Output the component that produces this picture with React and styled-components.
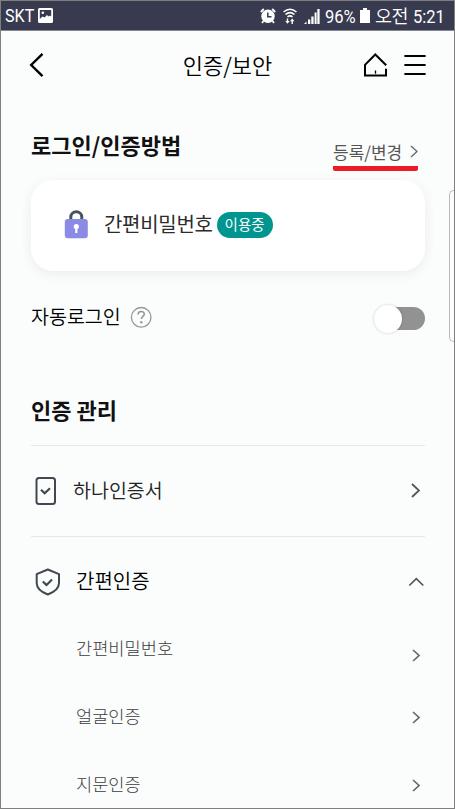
import React from "react";
import styled, { createGlobalStyle } from "styled-components";

const GlobalStyle = createGlobalStyle`
  * { box-sizing: border-box; }
  body { margin: 0; font-family: "Noto Sans CJK KR", "Noto Sans", sans-serif; }
  svg { display: block; flex: none; }
`;

const Screen = styled.div`
  position: relative;
  width: 455px;
  height: 809px;
  overflow: hidden;
  border: 1px solid #7f7f7f;
  background: #fbfdfc;
  display: flex;
  flex-direction: column;
`;

const StatusBar = styled.header`
  flex: none;
  display: flex;
  justify-content: space-between;
  height: 30px;
  padding: 0 10px 0 4px;
  background: #383a4f;
  border-bottom: 1px solid #85868e;
`;

const StatusGroup = styled.div`
  display: flex;
  align-items: center;
`;

const StatusIcons = styled.div`
  display: flex;
  align-items: center;
  gap: 7px;
  margin-right: 5px;
`;

const Text = styled.span`
  display: block;
  white-space: nowrap;
  line-height: 1;
  font-size: ${(p) => p.$size}px;
  font-weight: ${(p) => p.$weight || 400};
  color: ${(p) => p.$color || "#111"};
  letter-spacing: ${(p) => p.$spacing || 0}px;
  margin: ${(p) => p.$margin || 0};
`;

const StatusText = styled(Text)`
  width: ${(p) => p.$width}px;
  font-family: Roboto, sans-serif;
  transform: scaleX(0.88);
  transform-origin: 0 50%;
`;

const TitleBar = styled.nav`
  flex: none;
  display: grid;
  grid-template-columns: 1fr auto 1fr;
  align-items: center;
  height: 68px;
  margin-bottom: 2px;
  padding: 0 28px 0 27px;
`;

const Actions = styled.div`
  display: flex;
  justify-content: flex-end;
  gap: 16px;
`;

const Content = styled.main`
  display: flex;
  flex-direction: column;
  padding: 0 29px 0 30px;
`;

const SectionHead = styled.div`
  flex: none;
  display: flex;
  justify-content: space-between;
  height: ${(p) => p.$height}px;
  padding-top: ${(p) => p.$top}px;
`;

const ChangeLink = styled.div`
  display: flex;
  align-items: center;
  justify-content: space-between;
  width: 85px;
  height: 38px;
  margin: 0 7px 0 0;
  padding-top: 3px;
  border-bottom: 5px solid #ed1c24;
  border-radius: 2px;
`;

const Card = styled.section`
  flex: none;
  display: flex;
  align-items: center;
  height: 91px;
  padding: 0 33px;
  border-radius: 22px;
  background: #fff;
  box-shadow: 0 3px 12px rgba(60, 75, 75, 0.09);
`;

const Badge = styled.span`
  display: flex;
  align-items: center;
  justify-content: center;
  width: 56px;
  height: 26px;
  margin: -1px 0 0 4px;
  padding-bottom: 2px;
  border-radius: 13px;
  background: #00968f;
`;

const SettingRow = styled.div`
  flex: none;
  display: flex;
  align-items: center;
  height: 92px;
`;

const Toggle = styled.div`
  display: flex;
  align-items: center;
  width: 44px;
  height: 23px;
  margin: 3px 0 0 auto;
  border-radius: 12px;
  background: #929292;
`;

const Knob = styled.div`
  flex: none;
  width: 28px;
  height: 28px;
  margin-left: -7px;
  border-radius: 50%;
  background: #fff;
  box-shadow: 0 0 3px rgba(0, 0, 0, 0.2);
`;

const MenuRow = styled.div`
  flex: none;
  display: flex;
  align-items: center;
  height: ${(p) => p.$height}px;
  padding: ${(p) => p.$padding};
  border-top: 1px solid #e4e7ec;
`;

const SubRow = styled.div`
  flex: none;
  display: flex;
  align-items: center;
  justify-content: space-between;
  height: 68px;
  padding: 0 5px 0 45px;
`;

const EdgeHandle = styled.div`
  position: absolute;
  top: 189px;
  right: 0;
  width: 5px;
  height: 152px;
  border: 1px solid #b9bbbb;
  border-right: 0;
  border-radius: 5px 0 0 5px;
`;

const ChevronSvg = styled.svg`
  margin: ${(p) => p.$margin || 0};
`;

function Chevron({ width = 9, height = 14, color = "#555", stroke = 1.6, margin }) {
  return (
    <ChevronSvg $margin={margin} width={width} height={height} viewBox={`0 0 ${width} ${height}`} fill="none" stroke={color} strokeWidth={stroke}>
      <path d={`M1 1L${width - 1} ${height / 2}L1 ${height - 1}`} />
    </ChevronSvg>
  );
}

const PictureIcon = () => (
  <svg width="15" height="15" viewBox="0 0 15 15">
    <rect width="15" height="15" rx="1.5" fill="#fff" />
    <path d="M1.800 2h11.400v6.500L12 7.500 10.500 8.500 9 7 6.500 9.500 4.500 8.500 1.800 11z" fill="#383a4f" />
    <circle cx="4.800" cy="4.800" r="1.300" fill="#fff" />
  </svg>
);

const AlarmIcon = () => (
  <svg width="16" height="16" viewBox="0 0 16 16">
    <circle cx="8" cy="8.300" r="6.700" fill="#fff" />
    <path d="M.8 4l3-3M15.200 4l-3-3M3.500 13L2 15M12.500 13l1.500 2" stroke="#fff" strokeWidth="1.800" />
    <path d="M7.800 4.500v4.200h3.700" fill="none" stroke="#383a4f" strokeWidth="1.500" />
  </svg>
);

const WifiIcon = () => (
  <svg width="14" height="16" viewBox="0 0 14 16" fill="none" stroke="#fff" strokeWidth="1.600">
    <path d="M.5 4Q7-1.500 13.500 4M2.500 6.500Q7 2.700 11.500 6.500M4.500 8.800Q7 6.900 9.500 8.800" />
    <path d="M4.500 10.500v3.500M9.200 16v-3.500" strokeWidth="1.400" />
    <path d="M2.300 13h4.400l-2.200 2.800zM7 13.300l2.200-2.800 2.200 2.800z" fill="#fff" stroke="none" />
  </svg>
);

const SignalIcon = () => (
  <svg width="16" height="16" viewBox="0 0 16 16" fill="#fff">
    <path d="M0 16l2.500-2.500V16zM4 11.500h2.300V16H4zM7.300 8.500h2.300V16H7.300zM10.600 4.500h2V16h-2zM13.300 1h2.300v15h-2.300z" />
  </svg>
);

const BatteryIcon = () => (
  <svg width="10" height="15" viewBox="0 0 10 15" fill="#fff">
    <path d="M3 0h4v2h3v13H0V2h3z" />
  </svg>
);

const BackIcon = () => (
  <svg width="16" height="26" viewBox="0 0 16 26" fill="none" stroke="#000" strokeWidth="2.4">
    <path d="M14.500 1.800L3.200 13l11.300 11.200" />
  </svg>
);

const HomeIcon = () => (
  <svg width="25" height="26" viewBox="0 0 25 26" fill="none" stroke="#000" strokeWidth="2">
    <path d="M23.200 13.200L12.300 2.500 2 12.800v10.700h21V16.800" />
    <path d="M12.500 18.500v3.200" strokeWidth="1.300" />
  </svg>
);

const MenuIcon = () => (
  <svg width="22" height="26" viewBox="0 0 22 26" stroke="#000" strokeWidth="2.200" strokeLinecap="round">
    <path d="M1.200 4h19.600M1.200 13h19.600M1.200 22h19.600" />
  </svg>
);

const LockSvg = styled.svg`
  margin-bottom: 4px;
`;

const LockIcon = () => (
  <LockSvg width="25" height="30" viewBox="0 0 25 30">
    <path d="M6.800 12V8.300a5.500 5.500 0 0111 0V12" fill="none" stroke="#465362" strokeWidth="3" />
    <rect x=".8" y="10" width="23" height="19.200" rx="3" fill="#8b8be5" />
    <circle cx="12.300" cy="17.500" r="2.600" fill="#fff" />
    <path d="M11.200 18h2.200v6h-2.200z" fill="#fff" />
  </LockSvg>
);

const HelpSvg = styled.svg`
  margin-left: 9px;
`;

const HelpIcon = () => (
  <HelpSvg width="22" height="22" viewBox="0 0 22 22" fill="none" stroke="#969696" strokeWidth="1.300">
    <circle cx="11.200" cy="11.300" r="9.800" />
    <path d="M8.100 8.500c0-3.900 6.200-3.900 6.200-.4 0 2.100-3 2.400-3 4.900" strokeWidth="1.600" />
    <circle cx="11.300" cy="16.200" r="1.200" fill="#969696" stroke="none" />
  </HelpSvg>
);

const CertificateIcon = () => (
  <svg width="22" height="28" viewBox="0 0 22 28" fill="none" stroke="#3f4853" strokeWidth="2">
    <rect x="1.500" y="1" width="18.500" height="26" rx="2.500" />
    <path d="M6 12.800l3.700 3.500 5.300-5" strokeWidth="2.200" />
  </svg>
);

const ShieldIcon = () => (
  <svg width="26" height="28" viewBox="0 0 26 28" fill="none" stroke="#3f4853" strokeWidth="2" strokeLinejoin="round">
    <path d="M12.800 1.500L24 6.200V15c0 5-4.500 9-11.200 11.500C6 24 1.700 20 1.700 15V6.200z" />
    <path d="M7.800 13.500l3.800 3.600 5.400-5.500" strokeWidth="2.200" />
  </svg>
);

const CollapseSvg = styled.svg`
  margin: 0 1px 0 auto;
`;

const CollapseIcon = () => (
  <CollapseSvg width="16" height="10" viewBox="0 0 16 10" fill="none" stroke="#555" strokeWidth="1.700">
    <path d="M1.300 8.500l7-6.800 7 6.800" />
  </CollapseSvg>
);

const methods = [
  { name: "간편비밀번호", drop: 14 },
  { name: "얼굴인증", drop: 2 },
  { name: "지문인증", drop: 2 },
];

export default function App() {
  return (
    <>
      <GlobalStyle />
      <Screen>
        <StatusBar>
          <StatusGroup>
            <StatusText $size={18.3} $width={33} $color="#fff" $margin="2px 0 0">SKT</StatusText>
            <PictureIcon />
          </StatusGroup>
          <StatusGroup>
            <StatusIcons>
              <AlarmIcon />
              <WifiIcon />
              <SignalIcon />
            </StatusIcons>
            <StatusText $size={18.8} $width={35} $color="#fff" $margin="3px 0 0">96%</StatusText>
            <BatteryIcon />
            <Text $size={18.5} $weight={350} $color="#fff" $spacing={-0.5} $margin="0 5px 0 5px">오전</Text>
            <StatusText $size={18.8} $width={31} $color="#fff" $margin="3px 0 0">5:21</StatusText>
          </StatusGroup>
        </StatusBar>

        <TitleBar>
          <BackIcon />
          <Text $size={22} $weight={350} $color="#000" $margin="0 0 3px 1px">인증/보안</Text>
          <Actions>
            <HomeIcon />
            <MenuIcon />
          </Actions>
        </TitleBar>

        <Content>
          <SectionHead $height={79} $top={32}>
            <Text $size={22} $weight={700}>로그인/인증방법</Text>
            <ChangeLink>
              <Text $size={17} $color="#555">등록/변경</Text>
              <Chevron width={8} height={13} color="#666" stroke={1.3} />
            </ChangeLink>
          </SectionHead>

          <Card>
            <LockIcon />
            <Text $size={20} $color="#2c2c2c" $spacing={-0.3} $margin="0 0 3px 15px">간편비밀번호</Text>
            <Badge>
              <Text $size={14.5} $color="#fff">이용중</Text>
            </Badge>
          </Card>

          <SettingRow>
            <Text $size={19.5} $weight={350} $color="#000" $margin="0 0 2px">자동로그인</Text>
            <HelpIcon />
            <Toggle><Knob /></Toggle>
          </SettingRow>

          <SectionHead $height={82} $top={35}>
            <Text $size={22} $weight={700}>인증 관리</Text>
          </SectionHead>

          <MenuRow $height={91} $padding="0 5px 1px 4px">
            <CertificateIcon />
            <Text $size={19.5} $weight={350} $color="#222" $margin="0 0 2px 16px">하나인증서</Text>
            <Chevron width={9} height={15} stroke={1.8} margin="0 0 0 auto" />
          </MenuRow>

          <MenuRow $height={78} $padding="13px 0 0 4px">
            <ShieldIcon />
            <Text $size={20} $weight={350} $color="#000" $margin="0 0 2px 15px">간편인증</Text>
            <CollapseIcon />
          </MenuRow>

          {methods.map((m) => (
            <SubRow key={m.name}>
              <Text $size={17.6} $color="#3c3c3c" $weight={300} $margin="0 0 1px">{m.name}</Text>
              <Chevron width={8} height={13} color="#666" margin={`${m.drop}px 0 0`} />
            </SubRow>
          ))}
        </Content>
        <EdgeHandle />
      </Screen>
    </>
  );
}
